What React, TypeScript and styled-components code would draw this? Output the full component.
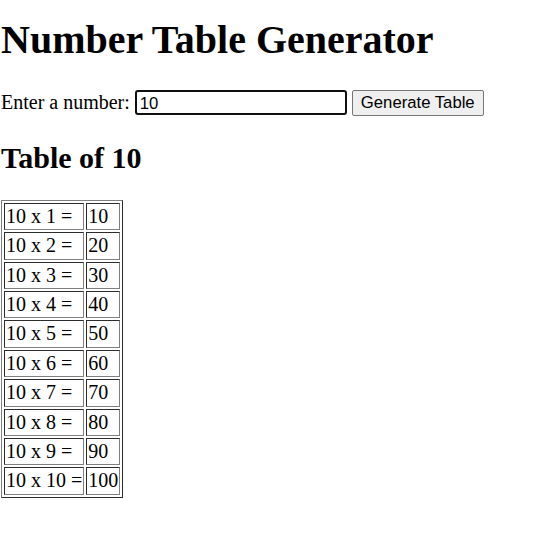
import React, { useState } from "react";
import styled, { createGlobalStyle } from "styled-components";

const Global = createGlobalStyle`
  html, body { margin: 0; padding: 0; background: #ffffff; }
  body { font-family: "Liberation Serif", "Times New Roman", serif; font-size: 20px; color: #000; }
`;

const Page = styled.div`
  padding: 0 1px;
`;

const Title = styled.h1`
  font-size: 40px;
  font-weight: bold;
  margin: 16px 0 26.8px;
  line-height: normal;
`;

const FormRow = styled.div`
  display: flex;
  align-items: center;
  height: 26px;
`;

const Label = styled.label`
  font-size: 20px;
  margin-right: 5px;
`;

const NumberInput = styled.input`
  box-sizing: border-box;
  width: 212px;
  height: 25px;
  border: 2px solid #101010;
  border-radius: 3px;
  padding: 2px 3px 0;
  font-family: "Liberation Sans", Arial, sans-serif;
  font-size: 16.7px;
  color: #000;
  outline: none;
  margin: 0;
`;

const Button = styled.button`
  box-sizing: border-box;
  margin-left: 5px;
  height: 26px;
  padding: 1px 8px;
  border: 1px solid #767676;
  border-radius: 2px;
  background: #efefef;
  font-family: "Liberation Sans", Arial, sans-serif;
  font-size: 16.7px;
  color: #000;
`;

const SubTitle = styled.h2`
  font-size: 30px;
  font-weight: bold;
  margin: 24.9px 0 25px;
  line-height: normal;
`;

const Table = styled.table`
  border: 1px outset #808080;
  border-spacing: 2px;
  border-collapse: separate;
  font-size: 20px;
`;

const Cell = styled.td`
  border: 1px inset #808080;
  padding: 1px;
  line-height: 23.4px;
  white-space: nowrap;
`;

export default function App() {
  const [value, setValue] = useState("10");
  const n = 10;
  const rows = Array.from({ length: 10 }, (_, i) => i + 1);
  return (
    <Page>
      <Global />
      <Title>Number Table Generator</Title>
      <FormRow>
        <Label>Enter a number:</Label>
        <NumberInput value={value} onChange={(e) => setValue(e.target.value)} />
        <Button>Generate Table</Button>
      </FormRow>
      <SubTitle>Table of {n}</SubTitle>
      <Table>
        <tbody>
          {rows.map((i) => (
            <tr key={i}>
              <Cell>{n} x {i} =</Cell>
              <Cell>{n * i}</Cell>
            </tr>
          ))}
        </tbody>
      </Table>
    </Page>
  );
}
